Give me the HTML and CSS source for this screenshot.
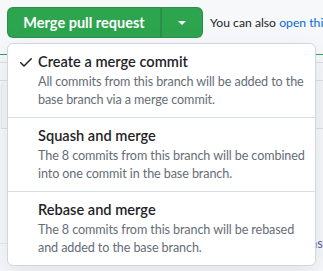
FILE: index.html
```html
<!DOCTYPE html>
<html lang="en">
<head>
  <meta charset="UTF-8">
  <title>Merge pull request</title>
  <link rel="stylesheet" href="styles.css">
</head>
<body>
  <div class="merge-row">
    <div class="btn-group">
      <button class="btn-merge">Merge pull request</button>
      <button class="btn-caret"><span class="caret"></span></button>
    </div>
    <div class="hint">You can also <a href="#">open this in GitHub Desktop</a></div>
  </div>

  <div class="panel">
    <div class="panel-row first"></div>
    <div class="panel-row"></div>
    <div class="panel-row tall"></div>
    <div class="panel-row last"><span class="tip">Protip: commit options</span></div>
  </div>

  <div class="merge-menu">
    <div class="menu-item selected">
      <svg class="check" width="16" height="16" viewBox="0 0 16 16"><path d="M13.78 4.22a.75.75 0 0 1 0 1.06l-7.25 7.25a.75.75 0 0 1-1.06 0L2.22 9.28a.751.751 0 0 1 .018-1.042.751.751 0 0 1 1.042-.018L6 10.94l6.72-6.72a.75.75 0 0 1 1.06 0Z"></path></svg>
      <div class="item-text">
        <div class="item-title">Create a merge commit</div>
        <div class="item-desc">All commits from this branch will be added to the base branch via a merge commit.</div>
      </div>
    </div>
    <div class="menu-item">
      <span class="check"></span>
      <div class="item-text">
        <div class="item-title">Squash and merge</div>
        <div class="item-desc">The 8 commits from this branch will be combined into one commit in the base branch.</div>
      </div>
    </div>
    <div class="menu-item">
      <span class="check"></span>
      <div class="item-text">
        <div class="item-title">Rebase and merge</div>
        <div class="item-desc">The 8 commits from this branch will be rebased and added to the base branch.</div>
      </div>
    </div>
  </div>
</body>
</html>
```

FILE: styles.css
```css
body {
  margin: 0;
  padding: 7px;
  background: #f6f8fa;
  font-family: Lato, 'Noto Sans', sans-serif;
  color: #1f2328;
  overflow: hidden;
  position: relative;
  height: 257px;
}

.merge-row {
  display: flex;
  align-items: center;
  gap: 7px;
}

.btn-group {
  display: flex;
  height: 31px;
}

.btn-group button {
  border: 1px solid rgba(31, 35, 40, 0.15);
  background: #2da44e;
  color: #fff;
  font-family: inherit;
  cursor: pointer;
}

.btn-merge {
  width: 154px;
  font-size: 14.5px;
  font-weight: 700;
  border-radius: 6px 0 0 6px;
  padding: 0;
}

.btn-caret {
  width: 42px;
  border-left: 1px solid #298e46 !important;
  border-radius: 0 6px 6px 0;
  padding: 0;
  display: flex;
  align-items: center;
  justify-content: center;
}

.caret {
  width: 0;
  height: 0;
  border-left: 4px solid transparent;
  border-right: 4px solid transparent;
  border-top: 4px solid #fff;
}

.hint {
  font-size: 12.2px;
  white-space: nowrap;
}

.hint a {
  color: #0969da;
  text-decoration: none;
}

.panel {
  margin: 16px -7px 0;
  border-top: 1px solid #2da44e;
}

.panel-row {
  border-bottom: 1px solid #d8dee4;
  height: 17px;
}

.panel-row.first {
  height: 7px;
}

.panel-row.tall {
  height: 47px;
  margin-left: 1px;
  border-left: 1px solid #e4e8ec;
  border-radius: 6px 0 0 0;
  background: #f3f5f7;
}

.panel-row.last {
  height: 108px;
  border-bottom: 1px solid #e4e8ec;
  text-align: right;
  padding-top: 6px;
}

.tip {
  display: inline-block;
  margin-top: 100px;
  font-size: 13px;
  color: #6e5494;
}

.merge-menu {
  position: absolute;
  top: 43px;
  left: 7px;
  width: 307px;
  background: #fff;
  border: 1px solid #d0d7de;
  border-radius: 6px;
  box-shadow: 0 8px 24px rgba(140, 149, 159, 0.2);
}

.menu-item {
  display: flex;
  padding: 8px 4px 8px 10px;
  border-bottom: 1px solid #d8dee4;
}

.menu-item:last-child {
  border-bottom: none;
}

.check {
  flex: none;
  width: 16px;
  height: 16px;
  margin-top: 2px;
  margin-right: 4px;
  fill: #1f2328;
}

.item-title {
  font-size: 14.6px;
  font-weight: 600;
  line-height: 20px;
}

.item-desc {
  margin-top: 1px;
  font-size: 12.6px;
  letter-spacing: -0.1px;
  line-height: 18px;
  color: #656d76;
}
```
